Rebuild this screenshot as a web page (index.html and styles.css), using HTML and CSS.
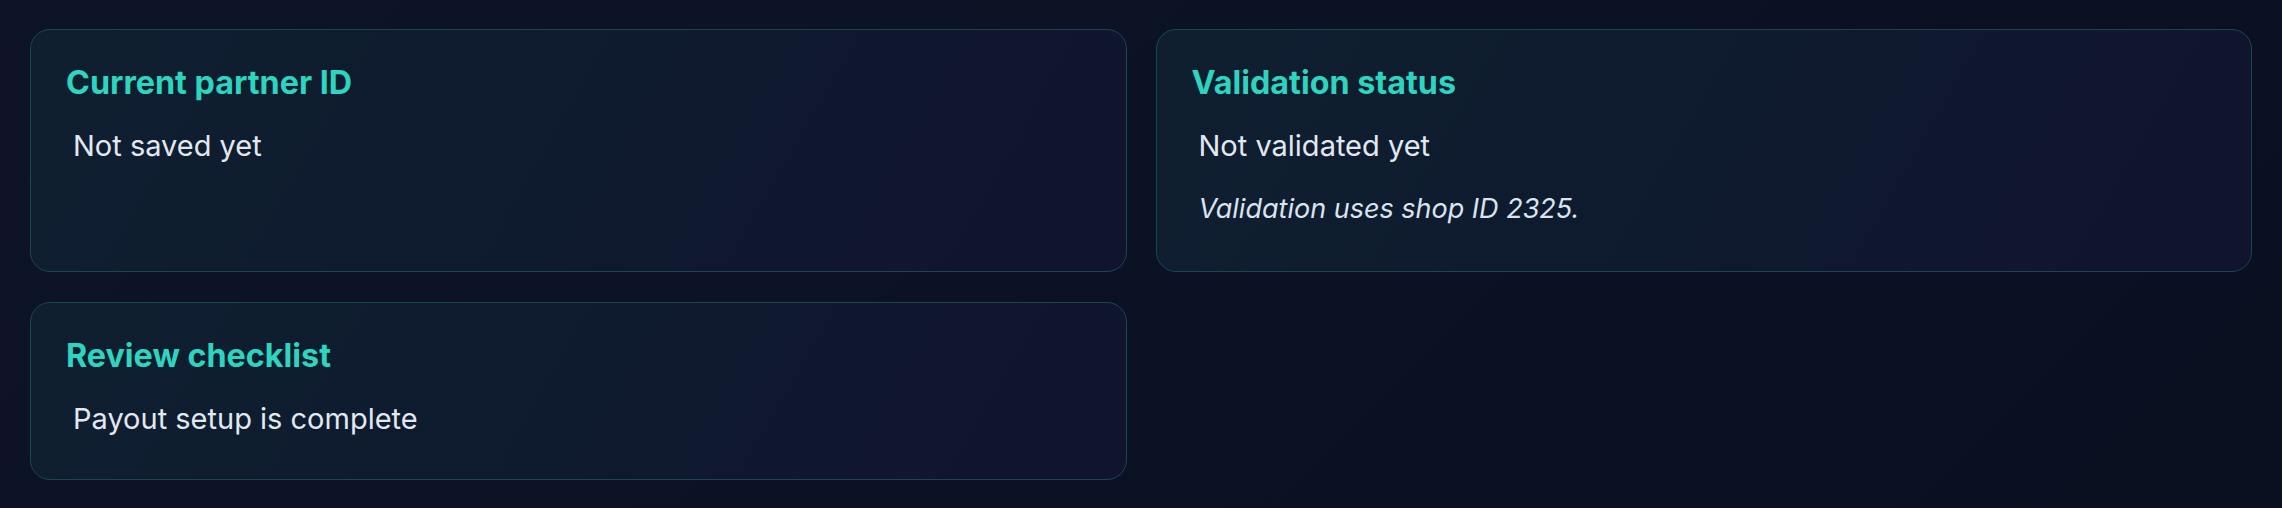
FILE: index.html
```html
<!DOCTYPE html>
<html lang="en">
<head>
<meta charset="utf-8">
<title>Partner status</title>
<link rel="stylesheet" href="styles.css">
</head>
<body>
<main class="grid">
  <section class="card">
    <h3 class="card-title">Current partner ID</h3>
    <p class="card-text">Not saved yet</p>
  </section>
  <section class="card">
    <h3 class="card-title">Validation status</h3>
    <p class="card-text">Not validated yet</p>
    <p class="card-text card-note">Validation uses shop ID 2325.</p>
  </section>
  <section class="card">
    <h3 class="card-title">Review checklist</h3>
    <p class="card-text">Payout setup is complete</p>
  </section>
</main>
</body>
</html>
```
FILE: styles.css
```css
html, body {
  margin: 0;
  padding: 0;
}

body {
  min-height: 508px;
  background: linear-gradient(135deg, #0d1428 0%, #0b1224 50%, #0a0f20 100%);
  font-family: "Inter", "Noto Sans", "Liberation Sans", sans-serif;
  color: #e2e8f0;
}

.grid {
  display: grid;
  grid-template-columns: 1fr 1fr;
  gap: 30px 29px;
  padding: 29px 30px;
  align-items: stretch;
}

.card {
  border: 1.5px solid #1a4650;
  border-radius: 20px;
  padding: 33px 35px 39px;
  background: linear-gradient(120deg, #0f1f30 0%, #0e1a2e 50%, #11142f 100%);
}

.card-title {
  margin: 0;
  font-size: 32.3px;
  line-height: 40px;
  font-weight: 700;
  color: #2dd4bf;
}

.card-text {
  margin: 22px 0 0;
  padding-left: 7px;
  font-size: 29px;
  line-height: 42px;
  color: #e2e8f0;
}

.card-note {
  margin-top: 21px;
  margin-bottom: 2px;
  font-size: 27px;
  font-style: italic;
  color: #dbe3ef;
}
```
